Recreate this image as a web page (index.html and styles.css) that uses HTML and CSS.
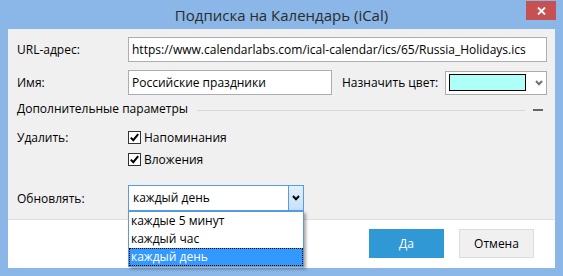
FILE: index.html
```html
<!DOCTYPE html>
<html lang="ru">
<head>
<meta charset="utf-8">
<title>Подписка на Календарь (iCal)</title>
<link rel="stylesheet" href="styles.css">
</head>
<body>
<div class="window">
  <div class="titlebar">
    <div class="title">Подписка на Календарь (iCal)</div>
    <button class="close" aria-label="Закрыть">
      <svg width="9" height="8" viewBox="0 0 9 8"><path d="M1 0.5 L8 7.5 M8 0.5 L1 7.5" stroke="#fff" stroke-width="1.8" fill="none"/></svg>
    </button>
  </div>
  <div class="content">
    <div class="form">
      <div class="row row-url">
        <span class="label">URL-адрес:</span>
        <div class="input input-url">https://www.calendarlabs.com/ical-calendar/ics/65/Russia_Holidays.ics</div>
      </div>
      <div class="row row-name">
        <span class="label">Имя:</span>
        <div class="input input-name">Российские праздники</div>
        <span class="label-color">Назначить цвет:</span>
        <div class="color-select">
          <span class="swatch"></span>
          <svg class="chev-grey" width="8" height="6" viewBox="0 0 8 6"><path d="M1 1 L4 4.2 L7 1" stroke="#707070" stroke-width="2" fill="none"/></svg>
        </div>
      </div>
      <div class="section">
        <span class="section-title">Дополнительные параметры</span>
        <span class="rule"></span>
        <span class="collapse"></span>
      </div>
      <div class="row row-check first">
        <span class="label">Удалить:</span>
        <span class="check"><span class="box"><svg width="11" height="11" viewBox="0 0 11 11"><path d="M1.8 5.6 L4.3 8.2 L9.2 2.2" stroke="#000" stroke-width="2" fill="none"/></svg></span>Напоминания</span>
      </div>
      <div class="row row-check second">
        <span class="label"></span>
        <span class="check"><span class="box"><svg width="11" height="11" viewBox="0 0 11 11"><path d="M1.8 5.6 L4.3 8.2 L9.2 2.2" stroke="#000" stroke-width="2" fill="none"/></svg></span>Вложения</span>
      </div>
      <div class="row row-update">
        <span class="label">Обновлять:</span>
        <div class="combo">
          <span class="combo-text">каждый день</span>
          <span class="combo-btn"><svg width="8" height="6" viewBox="0 0 8 6"><path d="M1 1 L4 4.2 L7 1" stroke="#000" stroke-width="2" fill="none"/></svg></span>
          <ul class="combo-list">
            <li>каждые 5 минут</li>
            <li>каждый час</li>
            <li class="selected">каждый день</li>
          </ul>
        </div>
      </div>
    </div>
    <div class="footer">
      <button class="btn btn-primary">Да</button>
      <button class="btn">Отмена</button>
    </div>
  </div>
</div>
</body>
</html>
```
FILE: styles.css
```css
* { box-sizing: border-box; }
html, body { margin: 0; padding: 0; }
body {
  font-family: "Open Sans", "Noto Sans", sans-serif;
  font-size: 12px;
  color: #000;
}
.window {
  width: 563px;
  height: 276px;
  background: #8ab6e8;
  display: flex;
  flex-direction: column;
}
.titlebar {
  height: 29px;
  flex: none;
  display: grid;
  grid-template-columns: 1fr auto 1fr;
  align-items: start;
}
.title {
  grid-column: 2;
  font-size: 15px;
  line-height: 30px;
  color: #2b2b2b;
  white-space: nowrap;
}
.close {
  grid-column: 3;
  justify-self: end;
  margin: 1px 7px 0 0;
  width: 30px;
  height: 19px;
  padding: 0;
  border: 0;
  background: #c75050;
  display: flex;
  align-items: center;
  justify-content: center;
}
.content {
  flex: 1;
  margin: 0 8px 8px;
  background: #f0f0f0;
  display: flex;
  flex-direction: column;
}
.form {
  flex: 1;
  padding: 8px 8px 0 9px;
}
.row {
  display: flex;
  align-items: center;
}
.label {
  width: 111px;
  flex: none;
}
.row-url { height: 25px; }
.input {
  height: 25px;
  border: 1px solid #abadb3;
  background: #fff;
  padding: 0 3px;
  line-height: 23px;
  white-space: nowrap;
  overflow: hidden;
}
.input-url { flex: 1; }
.row-name { margin-top: 8px; height: 25px; }
.input-name { width: 204px; flex: none; }
.label-color { margin-left: 10px; white-space: nowrap; }
.color-select {
  margin-left: auto;
  width: 102px;
  height: 24px;
  border: 1px solid #acacac;
  background: #fff;
  display: flex;
  align-items: center;
  padding-left: 3px;
}
.swatch {
  width: 77px;
  height: 17px;
  border: 1px solid #000;
  background: #aefff8;
}
.chev-grey { margin-left: 9px; }
.section {
  margin-top: 5px;
  height: 16px;
  display: flex;
  align-items: center;
}
.section-title { white-space: nowrap; }
.rule {
  flex: 1;
  height: 1px;
  background: #d9d9d9;
  margin: 4px 8px 0 9px;
}
.collapse {
  width: 10px;
  height: 2px;
  background: #666;
  margin: 3px 4px 0 0;
}
.row-check { height: 18px; }
.row-check.first { margin-top: 12px; }
.row-check.second { margin-top: 4px; }
.check {
  display: flex;
  align-items: center;
  gap: 3px;
}
.box {
  width: 13px;
  height: 13px;
  border: 1px solid #333;
  background: #fff;
  display: flex;
}
.row-update { margin-top: 17px; height: 26px; }
.combo {
  position: relative;
  width: 176px;
  height: 26px;
  border: 1px solid #569de5;
  background: #fff;
  display: flex;
}
.combo-text {
  flex: 1;
  padding-left: 4px;
  line-height: 24px;
}
.combo-btn {
  width: 15px;
  border-left: 1px solid #569de5;
  background: linear-gradient(#e4f0fc, #c6e0fa);
  display: flex;
  align-items: center;
  justify-content: center;
}
.combo-list {
  position: absolute;
  z-index: 10;
  left: -1px;
  top: calc(100% + 1px);
  width: 176px;
  margin: 0;
  padding: 0;
  list-style: none;
  background: #fff;
  border: 1px solid #5b9bd9;
  box-shadow: 2px 2px 3px rgba(0, 0, 0, 0.35);
}
.combo-list li {
  height: 18px;
  line-height: 18px;
  padding-left: 2px;
  white-space: nowrap;
}
.combo-list li.selected {
  background: #3399ff;
  color: #fff;
  outline: 1px dotted #000;
  outline-offset: -1px;
}
.footer {
  height: 49px;
  flex: none;
  background: #fff;
  border-top: 1px solid #dfdfdf;
  display: flex;
  justify-content: flex-end;
  align-items: flex-start;
  gap: 15px;
  padding: 9px 21px 0 0;
}
.btn {
  width: 75px;
  height: 29px;
  font: inherit;
  border: 1px solid #dcdcdc;
  background: #f0f0f0;
  color: #000;
  padding: 0;
}
.btn-primary {
  background: #3099d5;
  border-color: #3099d5;
  color: #fff;
}
```
